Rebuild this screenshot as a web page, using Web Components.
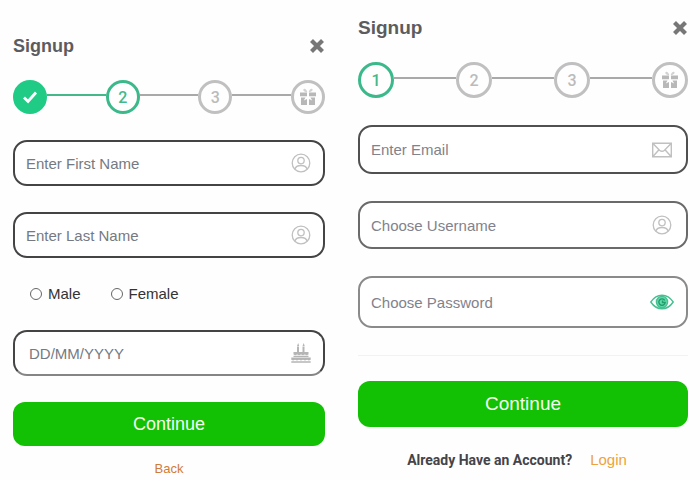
<!DOCTYPE html>
<html lang="en">
<head>
<meta charset="UTF-8">
<meta name="viewport" content="width=device-width, initial-scale=1.0">
<title>Signup</title>
<style>
    body {
        margin: 0;
        padding: 0 12px 0 13px;
        background: #fefefe;
        font-family: "Liberation Sans", Arial, sans-serif;
        font-size: 15px;
        display: grid;
        grid-template-columns: 312fr 330fr; /* second card is a bit wider */
        column-gap: 33px;
        align-items: start;
    }

    .details { --card-top: 34px; --card-gap: 26px; --title-size: 18px; --step-size: 34px; --done: #1fcb85; }
    .account { --card-top: 16px; --card-gap: 27px; --title-size: 19px; --step-size: 36px; --button-height: 46px; --button-gap: 23px; --button-size: 19px; --icon-right: 12px; --placeholder: #82828c; }
</style>
</head>
<body>

<signup-card class="details" heading="Signup">
    <signup-steps current="2"></signup-steps>
    <text-field label="Enter First Name"><ui-icon name="user"></ui-icon></text-field>
    <text-field label="Enter Last Name"><ui-icon name="user"></ui-icon></text-field>
    <radio-group label="Gender" options="Male,Female"></radio-group>
    <text-field kind="date" label="DD/MM/YYYY" style="--edge-bottom: #858585"><ui-icon name="cake"></ui-icon></text-field>
    <form-actions label="Continue">
        <text-link color="#d17b3a">Back</text-link>
    </form-actions>
</signup-card>

<signup-card class="account" heading="Signup">
    <signup-steps current="1"></signup-steps>
    <text-field label="Enter Email" style="--edge: #505050; --field-height: 49px"><ui-icon name="mail"></ui-icon></text-field>
    <text-field label="Choose Username" style="--edge: #6a6a6a; --field-height: 48px"><ui-icon name="user"></ui-icon></text-field>
    <text-field kind="password" label="Choose Password" style="--edge: #8a8a8a; --field-height: 52px"><ui-icon name="eye"></ui-icon></text-field>
    <form-actions divided label="Continue">
        <strong>Already Have an Account?</strong>
        <text-link large color="#eda33c">Login</text-link>
    </form-actions>
</signup-card>

<script>

const icons = {
    close: `<svg width="16" height="16" viewBox="0 0 16 16"><path d="M2.500 2.500 13.500 13.500M13.500 2.500 2.500 13.500" stroke="#777" stroke-width="4.200"/></svg>`,

    check: `<svg width="18" height="18" viewBox="0 0 18 18"><path d="M3 9.500 7 13.500 15 4.500" fill="none" stroke="#fff" stroke-width="2.800"/></svg>`,

    gift: `<svg width="18" height="18" viewBox="0 0 18 18" fill="#b8b8b8">
        <path d="M8.300 4.200C7.800 1.800 6 .2 4.800 1 3.500 2 4.500 3.800 8.300 4.200zM9.700 4.200C10.200 1.800 12 .2 13.200 1c1.300 1-.3 2.800-3.500 3.200z" fill="#d2d2d2"/>
        <path d="M1 4.600h7v3.600H1zM10 4.600h7v3.600h-7z"/>
        <path d="M2 9.400h4.500L4.800 12.500 8 11v6H2zM16 9.400h-4.500l1.700 3.100L10 11v6h6z"/>
    </svg>`,

    user: `<svg width="20" height="20" viewBox="0 0 20 20" fill="none" stroke="#c0c0c0" stroke-width="1.300">
        <circle cx="10" cy="10" r="8.800"/><circle cx="10" cy="7.600" r="3.200"/>
        <path d="M4 16.200c.6-2.600 2.700-3.700 6-3.700s5.400 1.100 6 3.700"/>
    </svg>`,

    mail: `<svg width="20" height="16" viewBox="0 0 20 16" fill="none" stroke="#c0c0c0" stroke-width="1.400">
        <path d="M.7 1.200h18.600v13.600H.7zM.7 1.200 7.500 8.200c1.700 1.500 3.300 1.500 5 0l6.800-7M.7 14.800 7 7.700M19.300 14.800 13 7.700"/>
    </svg>`,

    eye: `<svg width="24" height="16" viewBox="0 0 24 16" fill="none" stroke="#48bf92" stroke-width="1.400">
        <path d="M.8 8C4 3.200 7.500 1.200 12 1.200S20 3.200 23.200 8C20 12.800 16.500 14.800 12 14.800S4 12.800.8 8z"/>
        <circle cx="12" cy="8" r="5.600" fill="#5fdcaa"/>
        <path d="M14.800 6.500A3.200 3.200 0 1 0 15.200 8.500h-2.700V6.500" stroke="#239c6e"/>
    </svg>`,

    cake: `<svg width="20" height="20" viewBox="0 0 20 20" fill="#b5b5b5">
        <path d="M6 3.500h2v5.500H6zM11.500 3.500h2v5.500h-2zM7.200 0 8.200 3H6zM12.700 0l1 3h-2.200z"/>
        <path d="M2.500 9h15v2.500l-1.800.8-1.900-.8-1.900.8-1.900-.8-1.900.8-1.900-.8-1.900.8-1.800-.8z"/>
        <path d="M2.500 12.800h15v1.200h-15zM.3 14.600h19.400v2.200l-1.800.8-1.900-.8-2 .8-2-.8-2 .8-2-.8-2 .8-1.900-.8-2 .8-1.800-.8zM.3 18.200h19.400v1.600H.3z"/>
    </svg>`
};


// Icon: <ui-icon name="user">
class UiIcon extends HTMLElement {

    constructor(){
        super();
        this.attachShadow({ mode: 'open'});
    }

    connectedCallback(){
        this.shadowRoot.innerHTML = `
            <style>
                :host { display: flex; align-items: center; justify-content: center; }
                svg { display: block; }
            </style>
            ${icons[this.getAttribute('name')]}`;
    }
}


// Card with title, close button and a column for the form
class SignupCard extends HTMLElement {

    constructor(){
        super();
        this.attachShadow({ mode: 'open'});
    }

    connectedCallback(){
        this.shadowRoot.innerHTML = `
            <style>
                :host { display: block; padding-top: var(--card-top); }
                header {
                    display: flex;
                    align-items: center;
                    justify-content: space-between;
                    height: 24px;
                    margin-bottom: 22px;
                }
                h2 { margin: 0; font-size: var(--title-size); line-height: 24px; color: #5c5c5f; }
                button { border: 0; padding: 0; background: none; cursor: pointer; }
                form { display: flex; flex-direction: column; gap: var(--card-gap); }
            </style>
            <header>
                <h2>${this.getAttribute('heading')}</h2>
                <button type="button" aria-label="Close"><ui-icon name="close"></ui-icon></button>
            </header>
            <form><slot></slot></form>`;
    }
}


// Progress line, steps before the current one are ticked
class SignupSteps extends HTMLElement {

    constructor(){
        super();
        this.attachShadow({ mode: 'open'});
    }

    connectedCallback(){
        const current = Number(this.getAttribute('current'));
        let items = '';

        for (let i = 1; i <= 4; i++) {
            const state = i < current ? 'done' : i === current ? 'current' : '';
            let content = i;
            if (i < current) content = '<ui-icon name="check"></ui-icon>';
            if (i === 4) content = '<ui-icon name="gift"></ui-icon>';

            if (i > 1) items += `<i class="${i <= current ? 'passed' : ''}"></i>`;
            items += `<span class="${state}">${content}</span>`;
        }

        this.shadowRoot.innerHTML = `
            <style>
                :host { display: flex; align-items: center; }
                span {
                    box-sizing: border-box;
                    width: var(--step-size);
                    height: var(--step-size);
                    border: 3px solid #c0c0c0;
                    border-radius: 50%;
                    display: flex;
                    align-items: center;
                    justify-content: center;
                    font: 500 16px Roboto, sans-serif;
                    color: #bbb;
                }
                i { flex: 1; height: 2px; margin-bottom: 4px; background: #a9a9a9; }
                .passed { background: #45b88a; }
                .current { border-color: #3cb98b; color: #45b88a; }
                .done { border-color: var(--done); background: var(--done); }
            </style>
            ${items}`;
    }
}


// Text box with an icon in the slot
class TextField extends HTMLElement {

    constructor(){
        super();
        this.attachShadow({ mode: 'open'});
    }

    connectedCallback(){
        const label = this.getAttribute('label');
        const type = this.getAttribute('kind') === 'password' ? 'password' : 'text';

        this.shadowRoot.innerHTML = `
            <style>
                :host {
                    box-sizing: border-box;
                    display: flex;
                    align-items: center;
                    height: var(--field-height, 46px);
                    padding-right: var(--icon-right, 10px);
                    border: 2px solid var(--edge, #444);
                    border-bottom-color: var(--edge-bottom, var(--edge, #444));
                    border-radius: 14px;
                    background: #fff;
                }
                input {
                    flex: 1;
                    min-width: 0;
                    padding: 0 11px;
                    border: 0;
                    outline: 0;
                    background: none;
                    font: inherit;
                    color: #333;
                }
                :host([kind="date"]) input { padding-left: 14px; }
                input::placeholder { color: var(--placeholder, #757a82); opacity: 1; }
                ::slotted(ui-icon) { width: 24px; }
            </style>
            <input type="${type}" placeholder="${label}" aria-label="${label}">
            <slot></slot>`;
    }
}


// Radio buttons in a row
class RadioGroup extends HTMLElement {

    constructor(){
        super();
        this.attachShadow({ mode: 'open'});
    }

    connectedCallback(){
        const options = this.getAttribute('options').split(',');

        this.shadowRoot.innerHTML = `
            <style>
                :host { display: block; }
                div { display: flex; gap: 30px; padding-left: 17px; }
                label { display: flex; align-items: center; gap: 6px; line-height: 20px; color: #333; }
                input {
                    appearance: none;
                    width: 12px;
                    height: 12px;
                    margin: 0;
                    border: 1px solid #666;
                    border-radius: 50%;
                    background: #fff;
                }
                input:checked { background: #444; }
            </style>
            <div role="radiogroup" aria-label="${this.getAttribute('label')}">
                ${options.map(o => `<label><input type="radio" name="choice" value="${o}">${o}</label>`).join('')}
            </div>`;
    }
}


// Main button with a line of links below
class FormActions extends HTMLElement {

    constructor(){
        super();
        this.attachShadow({ mode: 'open'});
    }

    connectedCallback(){
        this.shadowRoot.innerHTML = `
            <style>
                :host { display: block; }
                button {
                    display: block;
                    width: 100%;
                    height: var(--button-height, 44px);
                    border: 0;
                    border-radius: 12px;
                    background: #12c004;
                    font: inherit;
                    font-size: var(--button-size, 18px);
                    color: #f2fff0;
                    cursor: pointer;
                }
                div {
                    display: flex;
                    align-items: center;
                    justify-content: center;
                    gap: 18px;
                    margin-top: var(--button-gap, 13px);
                    line-height: 20px;
                }
                :host([divided]) { border-top: 1px solid #f2f2f2; padding-top: 25px; }
                :host([divided]) div { padding-right: 12px; }
                ::slotted(strong) { font: 700 14px/20px Roboto, sans-serif; color: #44444a; }
            </style>
            <button type="button">${this.getAttribute('label')}</button>
            <div><slot></slot></div>`;
    }
}


class TextLink extends HTMLElement {

    constructor(){
        super();
        this.attachShadow({ mode: 'open'});
    }

    connectedCallback(){
        this.shadowRoot.innerHTML = `
            <style>
                :host { display: block; font-size: 13px; }
                :host([large]) { font-size: 15px; }
                a { color: ${this.getAttribute('color')}; text-decoration: none; }
            </style>
            <a href="#"><slot></slot></a>`;
    }
}


// Define Custom Elements
customElements.define('ui-icon', UiIcon);
customElements.define('signup-card', SignupCard);
customElements.define('signup-steps', SignupSteps);
customElements.define('text-field', TextField);
customElements.define('radio-group', RadioGroup);
customElements.define('form-actions', FormActions);
customElements.define('text-link', TextLink);

</script>
</body>
</html>
